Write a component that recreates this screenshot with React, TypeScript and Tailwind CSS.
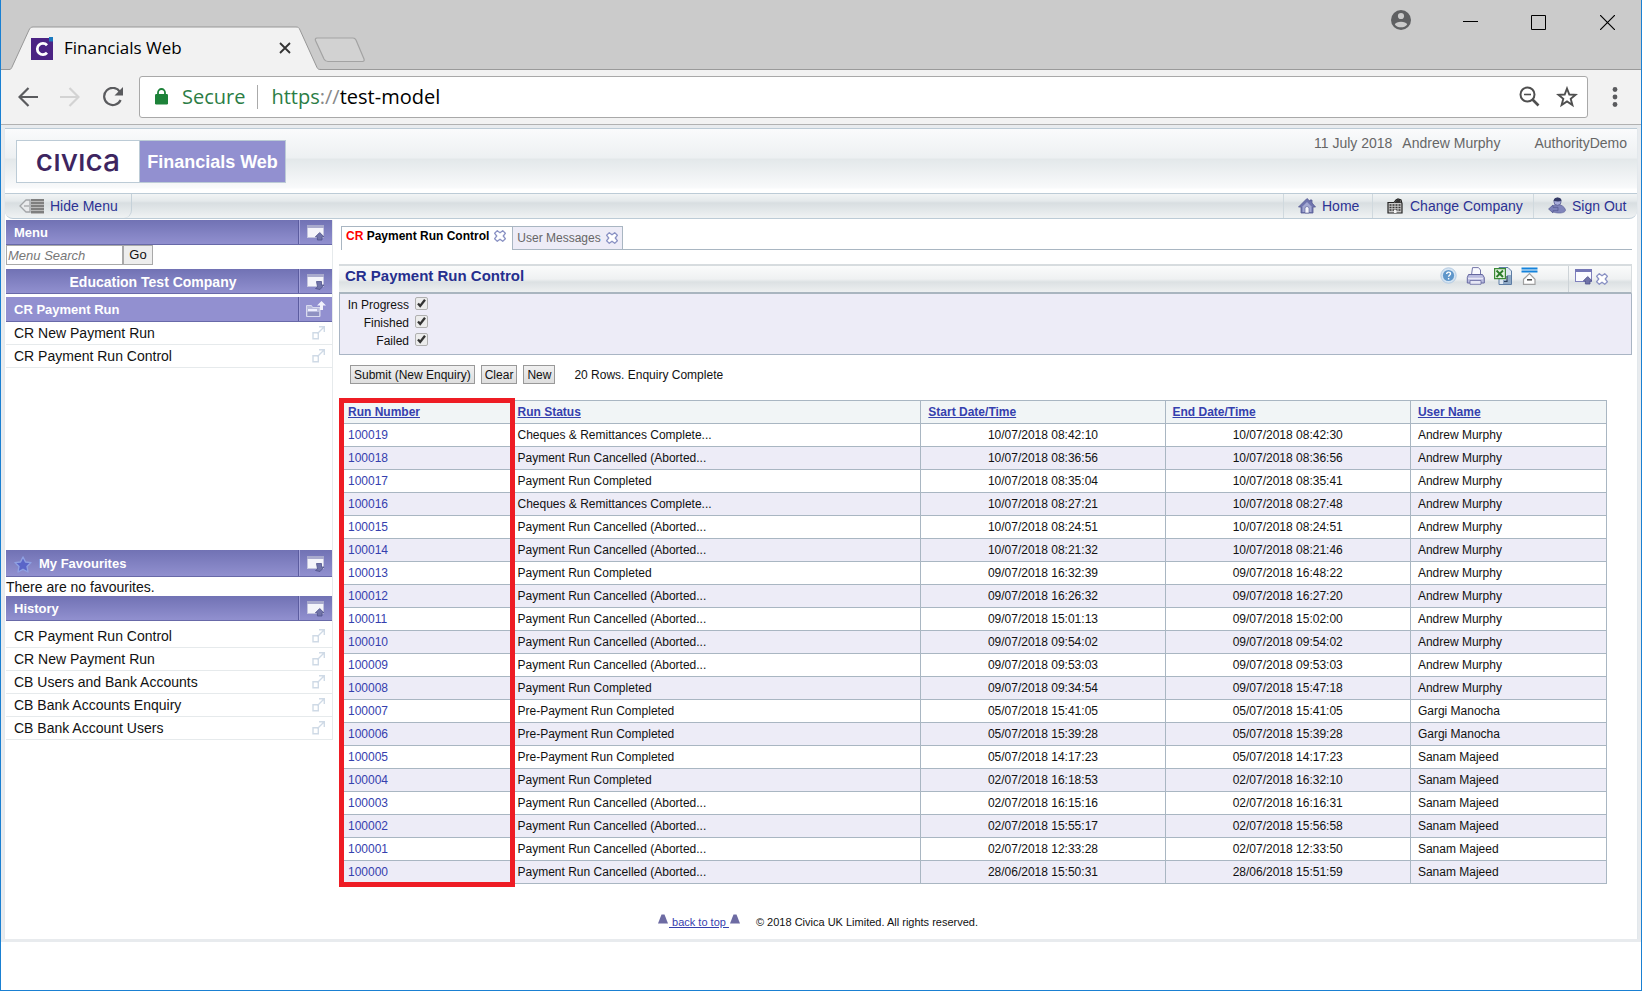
import type { ReactNode } from 'react';

const runs = [
  ['100019', 'Cheques & Remittances Complete...', '10/07/2018 08:42:10', '10/07/2018 08:42:30', 'Andrew Murphy'],
  ['100018', 'Payment Run Cancelled (Aborted...', '10/07/2018 08:36:56', '10/07/2018 08:36:56', 'Andrew Murphy'],
  ['100017', 'Payment Run Completed', '10/07/2018 08:35:04', '10/07/2018 08:35:41', 'Andrew Murphy'],
  ['100016', 'Cheques & Remittances Complete...', '10/07/2018 08:27:21', '10/07/2018 08:27:48', 'Andrew Murphy'],
  ['100015', 'Payment Run Cancelled (Aborted...', '10/07/2018 08:24:51', '10/07/2018 08:24:51', 'Andrew Murphy'],
  ['100014', 'Payment Run Cancelled (Aborted...', '10/07/2018 08:21:32', '10/07/2018 08:21:46', 'Andrew Murphy'],
  ['100013', 'Payment Run Completed', '09/07/2018 16:32:39', '09/07/2018 16:48:22', 'Andrew Murphy'],
  ['100012', 'Payment Run Cancelled (Aborted...', '09/07/2018 16:26:32', '09/07/2018 16:27:20', 'Andrew Murphy'],
  ['100011', 'Payment Run Cancelled (Aborted...', '09/07/2018 15:01:13', '09/07/2018 15:02:00', 'Andrew Murphy'],
  ['100010', 'Payment Run Cancelled (Aborted...', '09/07/2018 09:54:02', '09/07/2018 09:54:02', 'Andrew Murphy'],
  ['100009', 'Payment Run Cancelled (Aborted...', '09/07/2018 09:53:03', '09/07/2018 09:53:03', 'Andrew Murphy'],
  ['100008', 'Payment Run Completed', '09/07/2018 09:34:54', '09/07/2018 15:47:18', 'Andrew Murphy'],
  ['100007', 'Pre-Payment Run Completed', '05/07/2018 15:41:05', '05/07/2018 15:41:05', 'Gargi Manocha'],
  ['100006', 'Pre-Payment Run Completed', '05/07/2018 15:39:28', '05/07/2018 15:39:28', 'Gargi Manocha'],
  ['100005', 'Pre-Payment Run Completed', '05/07/2018 14:17:23', '05/07/2018 14:17:23', 'Sanam Majeed'],
  ['100004', 'Payment Run Completed', '02/07/2018 16:18:53', '02/07/2018 16:32:10', 'Sanam Majeed'],
  ['100003', 'Payment Run Cancelled (Aborted...', '02/07/2018 16:15:16', '02/07/2018 16:16:31', 'Sanam Majeed'],
  ['100002', 'Payment Run Cancelled (Aborted...', '02/07/2018 15:55:17', '02/07/2018 15:56:58', 'Sanam Majeed'],
  ['100001', 'Payment Run Cancelled (Aborted...', '02/07/2018 12:33:28', '02/07/2018 12:33:50', 'Sanam Majeed'],
  ['100000', 'Payment Run Cancelled (Aborted...', '28/06/2018 15:50:31', '28/06/2018 15:51:59', 'Sanam Majeed'],
];

const columns = [
  { name: 'Run Number', style: 'w-[13.4%] px-[6px]' },
  { name: 'Run Status', style: 'w-[32.4%] px-[6px]' },
  { name: 'Start Date/Time', style: 'w-[19.3%] px-[7px]' },
  { name: 'End Date/Time', style: 'w-[19.4%] px-[7px]' },
  { name: 'User Name', style: 'w-[15.5%] px-[7px]' },
];

const menuItems = ['CR New Payment Run', 'CR Payment Run Control'];

const historyItems = [
  'CR Payment Run Control',
  'CR New Payment Run',
  'CB Users and Bank Accounts',
  'CB Bank Accounts Enquiry',
  'CB Bank Account Users',
];

/* ---------- icons ---------- */

function WindowIcon({ down = false, outlined = false }: { down?: boolean; outlined?: boolean }) {
  return (
    <svg width="18" height="16" viewBox="0 0 18 16" className="shrink-0">
      <rect x="0.5" y="0.5" width="16" height="12" fill={outlined ? '#fbfbff' : '#f4f4fa'} stroke={outlined ? '#7f80bd' : '#c3c4de'} />
      <rect x="0" y="0" width="17" height="3" fill={outlined ? '#7577b6' : '#a9aacd'} />
      <path
        d={down ? 'M9.500 7.500h5v3.500h2.500l-4 4.500-4.500-1 2-1.500z' : 'M12.700 7.500l4.300 4.300h-2v3.200h-4.600v-3.200h-2z'}
        fill="#7073a8"
        stroke="#4f528c"
        strokeWidth="0.8"
      />
    </svg>
  );
}

function FolderIcon() {
  return (
    <svg width="20" height="17" viewBox="0 0 20 17" className="shrink-0">
      <path d="M0.500 4.500h5l1 2h7.500v9h-13.500z" fill="#b9bbdd" stroke="#d9daee" />
      <path d="M1.500 11h11.500v4H1.500z" fill="#8f91c2" />
      <path d="M2 8h9v2H2z" fill="#eef" />
      <path d="M15.500 0l4.500 4.500h-3V9h-3V4.500h-3z" fill="#f2f2fb" />
    </svg>
  );
}

function PopOutIcon() {
  return (
    <svg width="13" height="14" viewBox="0 0 13 14" fill="none" stroke="#cfdae6" strokeWidth="1.4">
      <path d="M1 6.700h5.300V12.700H1z" />
      <path d="M5.500 7.500L12 1M7 0.700h5.300V6" />
    </svg>
  );
}

function StarBadge() {
  return (
    <svg width="18" height="17" viewBox="0 0 18 17" className="shrink-0">
      <path
        d="M9 1l2.500 5 5.500.6-4 3.800 1 5.600-5-2.700-5 2.700 1-5.600-4-3.800 5.500-.6z"
        fill="#5a65c8"
        stroke="#8fa0e2"
        strokeWidth="1.400"
        strokeLinejoin="round"
      />
    </svg>
  );
}

function CrossIcon() {
  return (
    <svg width="12" height="12" viewBox="0 0 11 11" className="shrink-0">
      <path
        d="M3 .6L5.500 2.500 8 .6 10.400 3 8.500 5.500 10.400 8 8 10.400 5.500 8.500 3 10.400.6 8 2.500 5.500.6 3z"
        fill="#fff"
        stroke="#8a92c4"
        strokeWidth="1.2"
        strokeLinejoin="round"
      />
    </svg>
  );
}

function HideMenuIcon() {
  return (
    <svg width="26" height="16" viewBox="0 0 26 16" className="shrink-0">
      <path d="M1 8l6-6h4v12H7z" fill="#e9eaec" stroke="#a3a5a8" strokeWidth="1.300" />
      <path d="M5 8h5" stroke="#8f9194" />
      <rect x="12" y="1" width="13" height="15" fill="#b9b9b9" />
      <path d="M12 2h13M12 5h13M12 8h13M12 11h13M12 14h13" stroke="#6c6c6c" strokeWidth="1.500" />
    </svg>
  );
}

function HomeIcon() {
  return (
    <svg width="18" height="16" viewBox="0 0 18 16" className="shrink-0">
      <path d="M9 .5L.5 9h2.500v6h12V9h2.500L14 5V2h-2v1.300z" fill="#6f74ae" stroke="#565b93" strokeWidth="0.8" />
      <path d="M9 4L4.500 8.500V14h9V8.500z" fill="#a3a8d2" />
      <path d="M7 15v-4.500a2 2 0 014 0V15z" fill="#f5f6fb" stroke="#565b93" strokeWidth="0.6" />
    </svg>
  );
}

function CompanyIcon() {
  return (
    <svg width="17" height="16" viewBox="0 0 17 16" className="shrink-0">
      <path d="M1 4.500h6L9 2l2-1 3 1 1 3.500V15H1z" fill="#c9c9c9" stroke="#222" strokeWidth="1.200" />
      <path d="M8 4l2-2.500 3 .5 1 3H8z" fill="#333" />
      <path d="M2.500 7h12M2.500 9.500h12M2.500 12h12" stroke="#333" strokeWidth="1.300" strokeDasharray="2 1" />
      <path d="M7 12h2.500v3H7z" fill="#f4f4f4" />
    </svg>
  );
}

function SignOutIcon() {
  return (
    <svg width="18" height="17" viewBox="0 0 18 17" className="shrink-0">
      <path d="M4 11c0-2 2-3.500 5.500-3.500s7 2 8 5.500c0 2-3 3-6 3s-6-.5-7.500-2z" fill="#8085bb" stroke="#5f6499" strokeWidth="0.7" />
      <circle cx="9.500" cy="4.700" r="3.600" fill="#a9addb" stroke="#4d5287" strokeWidth="0.7" />
      <path d="M5.500 4C6 1 7.500.4 9.500.4s4 .8 4 3.600c-2 .6-5 .6-8 0z" fill="#343a66" />
      <path d="M.6 12l4.400-4v2.300h5v3.400H5V16z" fill="#7b80b8" stroke="#565b93" strokeWidth="0.8" />
    </svg>
  );
}

function HelpIcon() {
  return (
    <svg width="17" height="17" viewBox="0 0 17 17">
      <circle cx="8.500" cy="8.500" r="7.700" fill="#d5e4f2" stroke="#b4cbe2" />
      <circle cx="8.500" cy="8.500" r="5.600" fill="#5f96ca" />
      <path d="M6.700 7c0-2.600 3.800-2.400 3.800-.2 0 1.400-1.900 1.400-1.900 2.900M8.600 11v1.500" fill="none" stroke="#fff" strokeWidth="1.400" />
    </svg>
  );
}

function PrinterIcon() {
  return (
    <svg width="19" height="18" viewBox="0 0 19 18">
      <path d="M5.500 8l1-7.400h6L14.500 3v5" fill="#fafaff" stroke="#7476a8" />
      <path d="M2.500 7.500h14l1.800 3V16h-17v-5.500z" fill="#b9bbdf" stroke="#6668a0" />
      <path d="M2 11.500h15" stroke="#e8e8f6" strokeWidth="1.500" />
      <path d="M4 13.500h11v3.800H4z" fill="#e6e7f5" stroke="#6668a0" strokeWidth="0.8" />
    </svg>
  );
}

function ExcelIcon() {
  return (
    <svg width="18" height="18" viewBox="0 0 18 18">
      <path d="M5 .5h9L17.500 4v13.500H5z" fill="#dfe8f2" stroke="#5d7da5" />
      <path d="M9 13h5v4H9zM13 8h4v9h-3z" fill="#8fa9c6" />
      <path d="M.6 1.600h10.800v10H.6z" fill="#e6f3e2" stroke="#3b8a35" strokeWidth="1.200" />
      <path d="M2.500 3.500l6.500 6.500M9 3.500L2.500 10" stroke="#2c7d2a" strokeWidth="1.900" />
      <path d="M13 9v5.500h-3" fill="none" stroke="#2a3e5c" strokeWidth="1.200" />
    </svg>
  );
}

function CollapseIcon() {
  return (
    <svg width="17" height="18" viewBox="0 0 17 18">
      <path d="M.5 1.500h16M.5 4.500h16" stroke="#1583dc" strokeWidth="2" />
      <path d="M2.500 17.300v-5L8.500 6.500l5.500 5.800v5z" fill="#fff" stroke="#a0a0a0" strokeWidth="1.200" />
      <path d="M6 12.800h5" stroke="#444" strokeWidth="1.500" />
    </svg>
  );
}

function Triangle() {
  return (
    <svg width="10" height="10" viewBox="0 0 10 10" className="mb-[6px] shrink-0">
      <path d="M3.500 0.500h3L10 9.500H0z" fill="#6d6ba3" />
    </svg>
  );
}

/* ---------- browser window ---------- */

function TitleBar() {
  return (
    <div className="flex h-[70px] items-end border-b border-[#9a9a9a] bg-[#cbcbcb]">
      <div className="relative -mb-px ml-2 flex h-[44px] w-[312px] items-center pr-[30px] pl-[22px]">
        <svg className="absolute inset-0 h-full w-full" viewBox="0 0 312 44" preserveAspectRatio="none">
          <path d="M0 43.500c1.500 0 2-.5 2.800-2L20 4c1-2 2-3 4-3h263c2 0 3 .5 4 3l17 37.500c.8 1.500 1.500 2 4 2V44H0z" fill="#f2f2f2" />
          <path d="M0 43.500c1.500 0 2-.5 2.800-2L20 4c1-2 2-3 4-3h263c2 0 3 .5 4 3l17 37.500c.8 1.500 1.500 2 4 2" fill="none" stroke="#979797" />
        </svg>
        <svg width="23" height="23" viewBox="0 0 23 23" className="relative">
          <rect y="1" width="22" height="22" fill="#4b2383" />
          <path d="M16 8.200A5.600 5.600 0 1016 15.800" fill="none" stroke="#fff" strokeWidth="2.800" />
          <rect x="18" width="4" height="4.500" fill="#1b7ac0" />
        </svg>
        <span className="relative ml-[10px] flex-1 font-['Open_Sans','Noto_Sans',sans-serif] text-[17px] leading-6 text-black">
          Financials Web
        </span>
        <button aria-label="Close tab" className="relative">
          <svg width="12" height="12" viewBox="0 0 12 12" stroke="#333" strokeWidth="1.800">
            <path d="M1 1l10 10M11 1L1 11" />
          </svg>
        </button>
      </div>
      <button aria-label="New tab" className="mb-[6px] -ml-[7px]">
        <svg width="52" height="26" viewBox="0 0 52 26">
          <path d="M3 1h36c2 0 2.500 1 3 2l8 19c.6 1.500 0 2.500-1.500 2.500H14c-2 0-3-.5-4-2.500L1.500 3.500C1 2 1.500 1 3 1z" fill="#d2d2d2" stroke="#a3a3a3" strokeWidth="1.200" />
        </svg>
      </button>
      <div className="mb-[35px] ml-auto flex items-center pr-[26px]">
        <svg width="20" height="20" viewBox="0 0 20 20" className="mb-1" aria-label="Profile">
          <circle cx="10" cy="10" r="10" fill="#5f6062" />
          <circle cx="10" cy="6" r="3.100" fill="#cbcbcb" />
          <path d="M3.800 14.400C5 11 15 11 16.200 14.400 13.500 18.200 6.500 18.200 3.800 14.400z" fill="#cbcbcb" />
        </svg>
        <button aria-label="Minimize" className="ml-[52px]">
          <svg width="15" height="15" viewBox="0 0 15 15" stroke="#000">
            <path d="M0 6.500h15" />
          </svg>
        </button>
        <button aria-label="Maximize" className="ml-[53px]">
          <svg width="15" height="15" viewBox="0 0 15 15" fill="none" stroke="#000">
            <path d="M.5.5h14v14H.5z" />
          </svg>
        </button>
        <button aria-label="Close" className="ml-[54px]">
          <svg width="15" height="15" viewBox="0 0 15 15" stroke="#000" strokeWidth="1.200">
            <path d="M0 0l15 15M15 0L0 15" />
          </svg>
        </button>
      </div>
    </div>
  );
}

function AddressBar() {
  return (
    <div className="flex h-[55px] items-center border-b border-[#b1b1b1] bg-[#f2f2f2] pr-[23px] pb-px pl-[17px] text-[#5a5b5e]">
      <button aria-label="Back">
        <svg width="20" height="20" viewBox="0 0 20 20" fill="none" stroke="currentColor" strokeWidth="2.200">
          <path d="M20 10H2M10.500 1L1.500 10l9 9" />
        </svg>
      </button>
      <button aria-label="Forward" className="ml-[22px] text-[#d3d3d3]">
        <svg width="20" height="20" viewBox="0 0 20 20" fill="none" stroke="currentColor" strokeWidth="2.200">
          <path d="M0 10h18M9.500 1l9 9-9 9" />
        </svg>
      </button>
      <button aria-label="Reload" className="ml-[22px]">
        <svg width="22" height="20" viewBox="0 0 22 20">
          <path d="M18 4.800A8.600 8.600 0 1018.600 13" fill="none" stroke="currentColor" strokeWidth="2.200" />
          <path d="M21 0v8.500h-8.500z" fill="currentColor" />
        </svg>
      </button>
      <div className="ml-[15px] flex h-[42px] flex-1 items-center rounded-[3px] border border-[#a9a9a9] bg-white pr-[9px] pl-[15px] font-['Open_Sans','Noto_Sans',sans-serif] text-[20px] leading-7">
        <svg width="13" height="17" viewBox="0 0 13 17" className="shrink-0">
          <path d="M3 7V4.500a3.500 3.500 0 017 0V7" fill="none" stroke="#1d8239" strokeWidth="1.800" />
          <rect y="6" width="13" height="10.500" rx="1.200" fill="#1d8239" />
        </svg>
        <span className="ml-[14px] text-[#2b7d45]">Secure</span>
        <span className="mr-[13px] ml-3 h-6 w-px bg-[#aaa]" />
        <span className="flex-1">
          <span className="text-[#2b7d45]">https</span>
          <span className="text-[#888]">://</span>
          <span className="text-black">test-model</span>
        </span>
        <button aria-label="Zoom">
          <svg width="21" height="21" viewBox="0 0 21 21" fill="none" stroke="#4f4f4f">
            <circle cx="8.500" cy="8.500" r="7" strokeWidth="2" />
            <path d="M5 8.500h7" strokeWidth="1.600" />
            <path d="M13.500 13.500l6 6" strokeWidth="2.600" />
          </svg>
        </button>
        <button aria-label="Bookmark" className="ml-4">
          <svg width="22" height="22" viewBox="0 0 22 22" fill="none" stroke="#4f4f4f" strokeWidth="1.900">
            <path d="M11 2.500l2.300 6 6.300.3-4.900 4 1.700 6.200L11 15.500 5.600 19l1.700-6.200-4.900-4 6.300-.3z" />
          </svg>
        </button>
      </div>
      <button aria-label="More" className="ml-[24px]">
        <svg width="6" height="20" viewBox="0 0 6 20" fill="currentColor">
          <circle cx="3" cy="2.500" r="2.400" />
          <circle cx="3" cy="10" r="2.400" />
          <circle cx="3" cy="17.500" r="2.400" />
        </svg>
      </button>
    </div>
  );
}

/* ---------- page ---------- */

function NavLink({ icon, children, className = '' }: { icon: ReactNode; children: ReactNode; className?: string }) {
  return (
    <a href="#" className={`flex h-full items-center gap-[6px] border-l border-[#d0d9de] pb-px pl-[14px] ${className}`}>
      {icon}
      {children}
    </a>
  );
}

function PageHeader() {
  return (
    <header>
      <div className="flex h-[65px] items-start justify-between border-t border-[#bccbd6] bg-[linear-gradient(#fafbfc_0px,#edf0f2_29px,#e3e8ea_30px,#f9fafb_59px,#ffffff_60px)] pr-[10px]">
        <div className="mt-[11px] ml-[11px] flex h-[43px] border border-[#bccbd6]">
          <div className="flex w-[122px] items-center justify-center bg-white pb-1 font-[Inter,sans-serif] text-[30px] leading-8 font-medium text-[#3d2560]">
            cıvıca
          </div>
          <div className="flex w-[146px] items-center justify-center border-l border-[#bccbd6] bg-[#9290d0] text-[18px] leading-5 font-bold text-white">
            Financials Web
          </div>
        </div>
        <div className="mt-[6px] flex text-[14px] leading-4 text-[#666]">
          <span>11 July 2018</span>
          <span className="ml-[10px]">Andrew Murphy</span>
          <span className="ml-[34px]">AuthorityDemo</span>
        </div>
      </div>
      <nav className="flex h-[26px] items-center justify-between rounded-b-lg border-y border-[#bccbd6] bg-[linear-gradient(#f2f4f5_0px,#e4e9eb_7px,#d8dee1_9px,#eef1f2_23px)] text-[14px] leading-4 text-[#2c3294]">
        <button className="flex h-full w-[127px] items-center gap-[5px] rounded-br-lg border-r border-[#c5d1d9] pb-px pl-[14px]">
          <HideMenuIcon />
          Hide Menu
        </button>
        <div className="flex h-full">
          <NavLink icon={<HomeIcon />} className="w-[89px]">Home</NavLink>
          <NavLink icon={<CompanyIcon />} className="w-[161px]">Change Company</NavLink>
          <NavLink icon={<SignOutIcon />} className="w-[104px]">Sign Out</NavLink>
        </div>
      </nav>
    </header>
  );
}

function SideHeading({
  children,
  icon,
  label,
  flat = false,
  className = 'h-[25px]',
}: {
  children: ReactNode;
  icon: ReactNode;
  label: string;
  flat?: boolean;
  className?: string;
}) {
  return (
    <div
      className={`flex items-stretch border-b border-[#6869a8] text-[13px] leading-4 font-bold text-white ${
        flat ? 'bg-[#9290d0]' : 'bg-linear-to-b from-[#7172b4] to-[#9190cf]'
      } ${className}`}
    >
      <h2 className="flex flex-1 items-center pt-[2px] pl-2">{children}</h2>
      <div className="w-px bg-[#5b5c9f]" />
      <button aria-label={label} className="flex w-[33px] items-center justify-center border-l border-[#a3a2da] pt-px">
        {icon}
      </button>
    </div>
  );
}

function ItemList({ items }: { items: string[] }) {
  return (
    <ul>
      {items.map((item) => (
        <li key={item} className="flex h-[23px] items-center justify-between border-b border-[#e6eaec] pr-[7px] pb-px pl-2">
          <a href="#">{item}</a>
          <a href="#" aria-label={`Open ${item} in new window`}>
            <PopOutIcon />
          </a>
        </li>
      ))}
    </ul>
  );
}

function Sidebar() {
  return (
    <aside className="w-[327px] shrink-0 self-start border-r border-[#e6eaec] text-[14px] leading-4 text-[#111]">
      <SideHeading icon={<WindowIcon />} label="Collapse menu">Menu</SideHeading>
      <form className="flex h-[24px] items-start">
        <input
          aria-label="Menu Search"
          placeholder="Menu Search"
          className="h-5 w-[117px] border border-[#a9a9a9] bg-white pl-px text-[13px] leading-4 placeholder:text-[#777] placeholder:italic"
        />
        <button type="button" className="h-5 w-[30px] border border-[#a9a9a9] bg-[#ededed] text-[13px] leading-4">Go</button>
      </form>
      <SideHeading icon={<WindowIcon down />} label="Expand company">
        <span className="flex-1 pr-[6px] text-center text-[14px]">Education Test Company</span>
      </SideHeading>
      <div className="h-[3px]" />
      <SideHeading flat icon={<FolderIcon />} label="Up one level">CR Payment Run</SideHeading>
      <ItemList items={menuItems} />
      <div className="h-[182px]" />
      <SideHeading icon={<WindowIcon down />} label="Expand favourites" className="h-[27px]">
        <StarBadge />
        <span className="ml-[7px]">My Favourites</span>
      </SideHeading>
      <p className="flex h-[19px] items-center pt-px">There are no favourites.</p>
      <SideHeading icon={<WindowIcon />} label="Collapse history">History</SideHeading>
      <div className="pt-1">
        <ItemList items={historyItems} />
      </div>
    </aside>
  );
}

function Tabs() {
  return (
    <div className="ml-[2px] flex h-6 text-[12px] leading-4">
      <div className="flex items-center gap-[5px] border-t border-l border-[#a9b6c2] pr-[6px] pb-[6px] pl-1 font-bold text-black">
        <button>
          <span className="text-[#f00]">CR</span> Payment Run Control
        </button>
        <button aria-label="Close CR Payment Run Control">
          <CrossIcon />
        </button>
      </div>
      <div className="flex items-center gap-[5px] border border-[#a9b6c2] bg-[#edecf7] px-1 text-[#666]">
        <button>User Messages</button>
        <button aria-label="Close User Messages">
          <CrossIcon />
        </button>
      </div>
      <div className="flex-1 border-b border-[#a9b6c2]" />
    </div>
  );
}

function FilterBox({ label }: { label: string }) {
  return (
    <div className="flex h-[18px] items-center">
      <label htmlFor={label} className="w-[69px] text-right">{label}</label>
      <span className="relative mb-1 ml-[6px] flex">
        <input
          id={label}
          type="checkbox"
          defaultChecked
          className="peer h-[13px] w-[13px] appearance-none rounded-[2px] border border-[#b0b0b0] bg-[#ececec]"
        />
        <svg
          width="13"
          height="13"
          viewBox="0 0 13 13"
          className="pointer-events-none absolute inset-0 hidden peer-checked:block"
        >
          <path d="M3 6.500l2.200 2.500L10 2.800" fill="none" stroke="#333" strokeWidth="2.300" />
        </svg>
      </span>
    </div>
  );
}

function ControlPanel() {
  return (
    <section className="mt-[14px]">
      <div className="flex h-[30px] items-stretch border-t-2 border-r border-b-2 border-t-[#d7dcdf] border-r-[#d7dcdf] border-b-[#a9b5bf] bg-[linear-gradient(#fafbfb_0px,#eff1f2_13px,#dce1e3_16px,#eff1f2_27px)]">
        <h1 className="flex-1 pl-[6px] text-[15px] leading-5 font-bold text-[#262f8e]">CR Payment Run Control</h1>
        <div className="flex items-start gap-[9px] pt-px pr-[30px]">
          <button aria-label="Help"><HelpIcon /></button>
          <button aria-label="Print"><PrinterIcon /></button>
          <button aria-label="Export to Excel"><ExcelIcon /></button>
          <button aria-label="Collapse"><CollapseIcon /></button>
        </div>
        <div className="flex w-[63px] items-center gap-[3px] border-l border-[#cdd3d7] pb-1 pl-[6px]">
          <button aria-label="Restore panel"><WindowIcon outlined /></button>
          <button aria-label="Close panel" className="mt-1"><CrossIcon /></button>
        </div>
      </div>
      <div className="h-[61px] border-x border-b border-[#a9b5c4] bg-[#edecf7] pt-[2px] text-[12px] leading-4 text-[#111]">
        <FilterBox label="In Progress" />
        <FilterBox label="Finished" />
        <FilterBox label="Failed" />
      </div>
    </section>
  );
}

function ActionButton({ children }: { children: ReactNode }) {
  return (
    <button className="h-[19px] border border-[#999] bg-linear-to-b from-[#f0f0f0] to-[#dedede] px-[3px] text-[12px] leading-4">
      {children}
    </button>
  );
}

function RunsTable() {
  return (
    <div className="relative mt-4 mr-[25px] ml-[2px]">
      <table className="w-full table-fixed border-collapse text-[12px] leading-4">
        <thead>
          <tr className="h-[23px] bg-[#f1f5f6]">
            {columns.map((column) => (
              <th key={column.name} className={`border border-[#a9b6c2] text-left ${column.style}`}>
                <a href="#" className="text-[#3540ae] underline">{column.name}</a>
              </th>
            ))}
          </tr>
        </thead>
        <tbody>
          {runs.map(([id, status, start, end, user]) => (
            <tr key={id} className="h-[23px] even:bg-[#edecf7]">
              <td className="border border-[#a9b6c2] px-[6px]">
                <a href="#" className="text-[#3540ae]">{id}</a>
              </td>
              <td className="border border-[#a9b6c2] px-[6px]">{status}</td>
              <td className="border border-[#a9b6c2] text-center">{start}</td>
              <td className="border border-[#a9b6c2] text-center">{end}</td>
              <td className="border border-[#a9b6c2] px-[7px]">{user}</td>
            </tr>
          ))}
        </tbody>
      </table>
      {/* highlight round the first column */}
      <div className="pointer-events-none absolute -top-[2px] -bottom-[3px] -left-[2px] w-[13.9%] border-[5px] border-[#ee1c24]" />
    </div>
  );
}

export default function App() {
  return (
    <div className="flex min-h-screen flex-col border-x border-b border-[#1a80d2] bg-white font-['Liberation_Sans',Arial,sans-serif] text-[#111]">
      <TitleBar />
      <AddressBar />
      <div className="border-x-3 border-t-3 border-b-3 border-[#e8ebee]">
        <div className="border-x border-[#e3e8ec]">
          <PageHeader />
          <div className="flex pt-px pb-[9px]">
            <div className="w-px shrink-0" />
            <Sidebar />
            <main className="ml-[6px] min-w-0 flex-1 pt-[6px] pr-[5px]">
              <Tabs />
              <ControlPanel />
              <div className="mt-[10px] ml-[11px] flex items-center gap-[6px] text-[12px] leading-4">
                <ActionButton>Submit (New Enquiry)</ActionButton>
                <ActionButton>Clear</ActionButton>
                <ActionButton>New</ActionButton>
                <span className="ml-[13px]">20 Rows. Enquiry Complete</span>
              </div>
              <RunsTable />
              <footer className="mt-[30px] ml-[319px] flex items-end text-[11px] leading-4">
                <a href="#" className="flex items-end text-[#3540ae]">
                  <Triangle />
                  <span className="px-px whitespace-pre underline"> back to top </span>
                  <Triangle />
                </a>
                <span className="ml-4">© 2018 Civica UK Limited. All rights reserved.</span>
              </footer>
            </main>
          </div>
        </div>
      </div>
    </div>
  );
}
